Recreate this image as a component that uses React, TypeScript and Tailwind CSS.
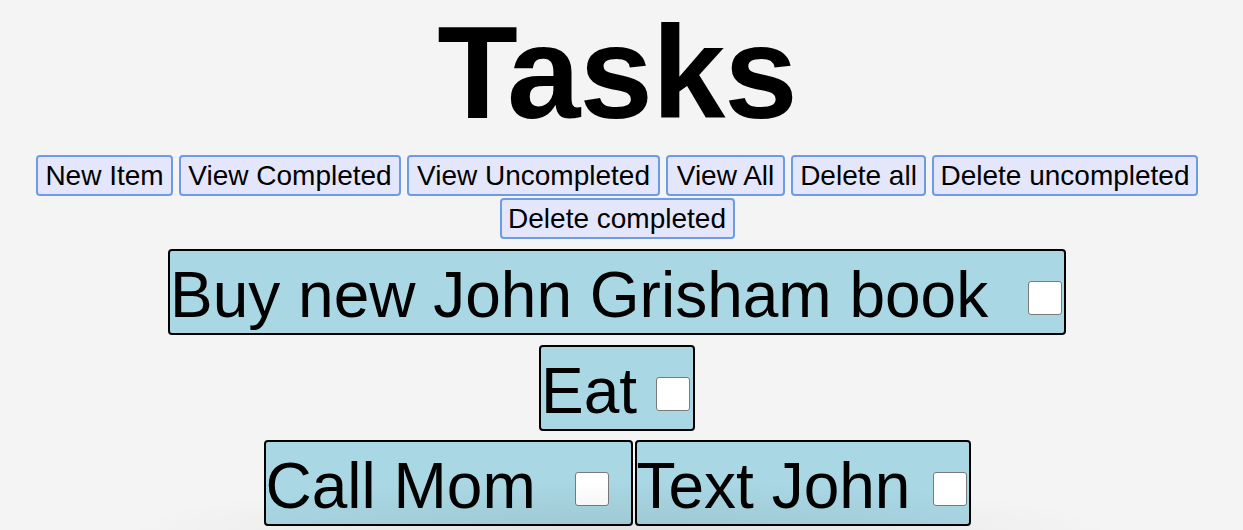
import { useState } from "react";

type Task = { id: number; text: string; width: string; gap: string };

const buttons = [
  { label: "New Item", w: "w-[137px]" },
  { label: "View Completed", w: "w-[222px]" },
  { label: "View Uncompleted", w: "w-[253px]" },
  { label: "View All", w: "w-[119px]" },
  { label: "Delete all", w: "w-[135px]" },
  { label: "Delete uncompleted", w: "w-[266px]" },
  { label: "Delete completed", w: "w-[235px]" },
];

const rows: Task[][] = [
  [{ id: 1, text: "Buy new John Grisham book", width: "w-[898px]", gap: "mr-[2px]" }],
  [{ id: 2, text: "Eat", width: "w-[156px]", gap: "mr-[3px]" }],
  [
    { id: 3, text: "Call Mom", width: "w-[369px]", gap: "mr-[22px]" },
    { id: 4, text: "Text John", width: "w-[336px]", gap: "mr-[2px]" },
  ],
];

const TaskItem = ({ task }: { task: Task }) => {
  const [done, setDone] = useState(false);
  return (
    <div
      className={`flex items-start h-[86px] ${task.width} bg-[#a9d7e3] border-2 border-black rounded-[4px]`}
    >
      <span className="mt-[12px] text-[64px] leading-none whitespace-nowrap">
        {task.text}
      </span>
      <input
        type="checkbox"
        checked={done}
        onChange={() => setDone(!done)}
        className={`appearance-none ml-auto ${task.gap} mt-[30px] w-[34px] h-[34px] shrink-0 bg-white border border-[#7a7a7a] rounded-[3px]`}
      />
    </div>
  );
};

const App = () => {
  return (
    <div className="relative w-full h-[530px] overflow-hidden bg-[#f4f4f4] text-black font-['Liberation_Sans',Arial,sans-serif]">
      <div className="w-[1234px] flex flex-col items-center">
        <h1 className="text-[132px] leading-[1.1] font-bold tracking-[-1px]">
          Tasks
        </h1>

        <div className="mt-[10px] w-[1200px] flex flex-wrap justify-center gap-x-[6px] gap-y-[2px]">
          {buttons.map((b) => (
            <button
              key={b.label}
              className={`${b.w} h-[41px] flex items-center justify-center bg-[#e4e7fb] border-2 border-[#6d9be6] rounded-[4px] text-[28px] leading-none whitespace-nowrap`}
            >
              {b.label}
            </button>
          ))}
        </div>

        <div className="mt-[10px] flex flex-col items-center gap-[10px]">
          {rows.map((row, i) => (
            <div key={i} className={`flex gap-[2px] ${i === 2 ? "-mt-[1px]" : ""}`}>
              {row.map((t) => (
                <TaskItem key={t.id} task={t} />
              ))}
            </div>
          ))}
        </div>
      </div>

      {/* soft shade at the bottom edge */}
      <div className="pointer-events-none absolute bottom-0 left-[120px] w-[1000px] h-[50px] bg-[radial-gradient(ellipse_at_bottom,rgba(0,0,0,0.07),transparent_70%)]" />
    </div>
  );
};

export default App;
